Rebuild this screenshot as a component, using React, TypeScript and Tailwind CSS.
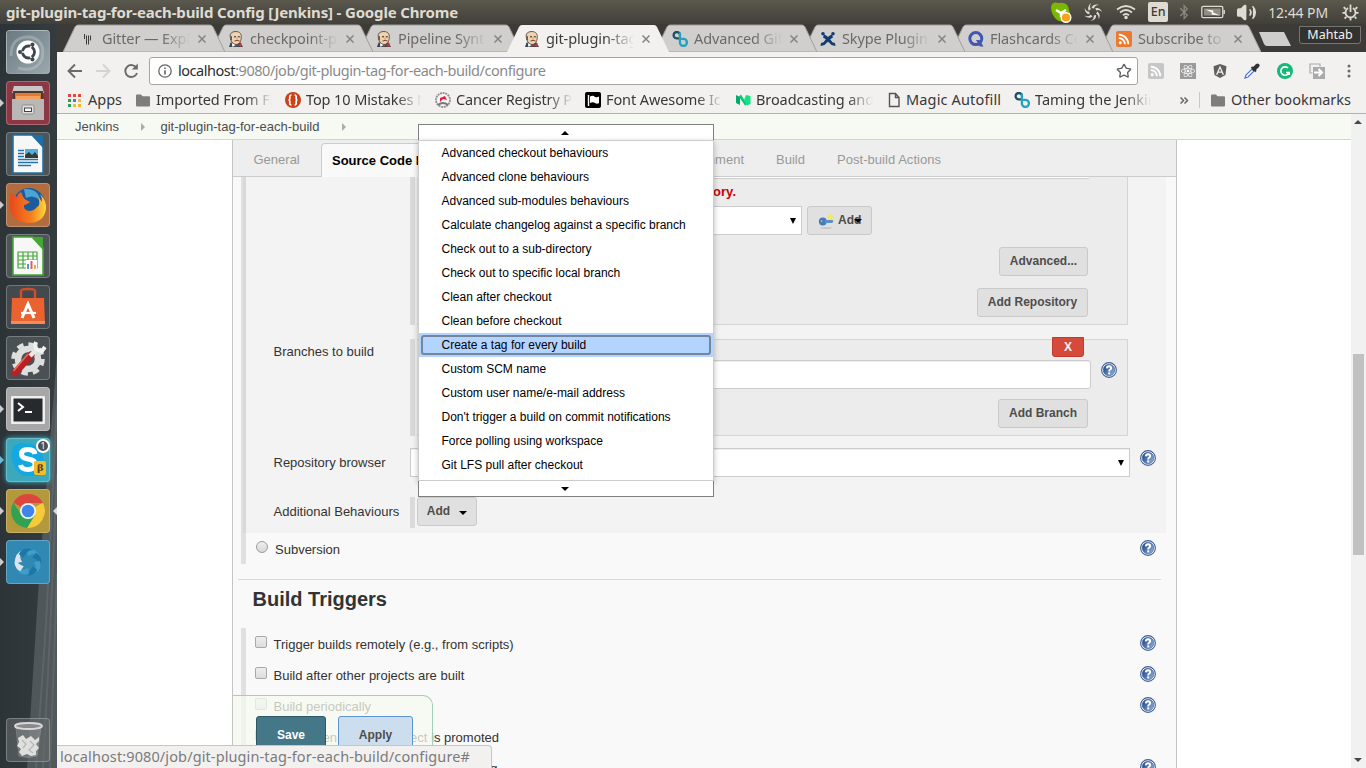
import React from "react";
import { FaReact, FaAngular, FaRss, FaBluetoothB } from "react-icons/fa";
import { Star, Volume2 } from "lucide-react";

/* ---------- small drawings ---------- */

const Butler = () => (
  <svg viewBox="0 0 16 16" className="size-4 shrink-0">
    <path d="M1 16 L2.500 11.500 H12.500 L15 16Z" fill="#3c4650" />
    <path d="M2.200 5 C1.800 1.500 5.500 .5 8 .5 C12 .7 13.800 3 13.200 7 C13 11 11 13.500 8 13.500 C4.500 13 2.500 10 2.200 5Z" fill="#efd2b0" stroke="#4a3d35" strokeWidth=".8" />
    <path d="M2.600 4.500 L2.200 9 L4 9.500 V5.500Z" fill="#6b5a4a" />
    <path d="M6 5.800h2M9.800 5.800h2" stroke="#2c2622" strokeWidth="1" />
    <path d="M6.500 10 Q9.200 8.800 11.600 10" stroke="#7a4030" strokeWidth="1" fill="none" />
    <path d="M9 6.500v2.200" stroke="#b58a68" strokeWidth=".8" />
    <path d="M8 13.500 L13.500 16 V12 L7 16Z" fill="#d33833" />
    <path d="M3.800 12 L7.500 14 L4.500 16Z" fill="#fff" />
  </svg>
);

const Bees = () => (
  <svg viewBox="0 0 16 16" className="size-4 shrink-0" fill="none" strokeWidth="2.300">
    <path d="M8 4.600 A3.200 3.200 0 1 0 4.600 7.400 L8.500 7.400" stroke="#1d4f66" />
    <path d="M7.900 1.500 V11.400 A3.500 3.500 0 1 0 11.400 7.900 H8" stroke="#1fa3bf" />
  </svg>
);

const GitterMark = () => (
  <svg viewBox="0 0 16 16" className="size-4 shrink-0" stroke="#3a3a3a" strokeWidth="1">
    <path d="M4.500 3v5M6.500 4.500v9M8.500 4.500v9M10.500 4.500v5" />
  </svg>
);

const CrossMark = () => (
  <svg viewBox="0 0 16 16" className="size-4 shrink-0" fill="none" stroke="#123a73" strokeWidth="3">
    <path d="M.8 13.200 Q3.500 14 6 10.500 Q9.500 6 12.500 5" />
    <path d="M15.200 13.200 Q12.500 14 10 10.500 Q6.500 6 3.500 5" />
    <circle cx="3" cy="2.800" r="1.800" fill="#123a73" stroke="none" /><circle cx="13" cy="2.800" r="1.800" fill="#123a73" stroke="none" />
  </svg>
);

const QMark = () => (
  <svg viewBox="0 0 16 16" className="size-4 shrink-0">
    <circle cx="7.800" cy="7.600" r="6" fill="none" stroke="#4257b2" strokeWidth="3" />
    <path d="M8 9 L11.500 9 L15.500 15.500 L11.800 15.500Z" fill="#4257b2" />
  </svg>
);

const RssTile = () => (
  <span className="flex size-4 shrink-0 items-center justify-center rounded-[2px] bg-[#ec7a2e]">
    <FaRss className="size-3 text-white" />
  </span>
);

const Folder = () => (
  <svg viewBox="0 0 14 13" className="h-[13px] w-[14px] shrink-0" fill="#7d7d7d">
    <path d="M0 1.500 Q0 .5 1 .5 H5 L6.500 2.200 H13 Q14 2.200 14 3.200 V11.500 Q14 12.500 13 12.500 H1 Q0 12.500 0 11.500Z" />
  </svg>
);

const Help = () => (
  <svg viewBox="0 0 16 16" className="size-4 shrink-0">
    <defs>
      <linearGradient id="hg" x1="0" x2="1" y1=".2" y2=".8">
        <stop offset="0" stopColor="#20478c" /><stop offset="1" stopColor="#8fadd3" />
      </linearGradient>
    </defs>
    <circle cx="8" cy="8" r="7.400" fill="#fff" stroke="#3d609b" strokeWidth="1.100" />
    <circle cx="8" cy="8" r="5.800" fill="url(#hg)" stroke="#3a5f9c" strokeWidth=".6" />
    <path d="M5.800 6.400 Q5.900 4.300 8 4.300 Q10.200 4.400 10.200 6.200 Q10.100 7.400 8.700 8 Q8.200 8.400 8.200 9.400" fill="none" stroke="#fff" strokeWidth="1.900" />
    <rect x="7.200" y="10.400" width="2" height="2" fill="#fff" />
  </svg>
);

const Down = ({ className = "" }: { className?: string }) => (
  <svg viewBox="0 0 8 4" className={`h-1 w-2 shrink-0 ${className}`}><path d="M0 0H8L4 4Z" fill="#000" /></svg>
);

const SelectArrow = () => (
  <svg viewBox="0 0 6 6" className="h-1.5 w-1.5 shrink-0"><path d="M0 0H6L3 6Z" fill="#000" /></svg>
);

/* ---------- desktop panel ---------- */

const sixth = [0, 51, 103, 154, 206, 257, 309];

const TopPanel = () => (
  <div className="flex h-6 shrink-0 items-center bg-linear-to-b from-[#5b584d] to-[#403f39] pl-1.5 pr-[7px] font-['Noto_Sans',sans-serif] text-[#dfdbd2]">
    <div className="flex-1 whitespace-nowrap text-[15px] font-bold tracking-[-0.160px]">git-plugin-tag-for-each-build Config [Jenkins] - Google Chrome</div>
    <svg viewBox="0 0 22 22" className="mr-3 h-[22px] w-[22px]">
      <path d="M1 6 Q2 0 8 2 Q18 0 19 9 Q22 16 17 20 Q9 22 5 17 Q1 12 1 6Z" fill="#7ab800" />
      <path d="M6 9l5 3 5-3M11 12v4" stroke="#fff" strokeWidth="2.500" fill="none" />
      <circle cx="16" cy="16.500" r="4.800" fill="#f9a11b" stroke="#fff" strokeWidth="1.400" />
    </svg>
    <svg viewBox="0 0 18 18" className="mr-[14px] size-[18px]" fill="#dfdbd2">
      {sixth.map((a) => <path key={a} d="M7.500 5Q9 .5 15 1.800Q10.500 2.500 10 5.500Z" transform={`rotate(${a} 9 9)`} />)}
    </svg>
    <svg viewBox="0 0 20 16" className="mr-3 h-4 w-5" fill="none" stroke="#dfdbd2" strokeWidth="1.800">
      <path d="M1 5.500Q10 -1.500 19 5.500M4 8.500Q10 3.500 16 8.500M7 11.300Q10 8.700 13 11.300" /><circle cx="10" cy="13.500" r=".9" />
    </svg>
    <div className="mr-[10px] flex h-5 w-5 items-center justify-center rounded-[2px] bg-[#dfdbd2] text-[12.500px] font-medium text-[#3c3b37]">En</div>
    <FaBluetoothB className="mr-[11px] h-4 w-3 text-[#8b887e]" />
    <svg viewBox="0 0 24 14" className="mr-[11px] h-3.5 w-6">
      <rect x=".8" y="1.300" width="21" height="11.400" rx="1.500" fill="none" stroke="#dfdbd2" strokeWidth="1.300" />
      <rect x="3" y="3.500" width="16.600" height="7" fill="#918e85" />
      <path d="M4.500 4.500L12.500 5.500L12 7.500L19 10.500L10.500 9.500L11 7.500Z" fill="#fff" /><path d="M23.200 5v4" stroke="#dfdbd2" strokeWidth="1.400" />
    </svg>
    <Volume2 className="mr-[11px] size-[21px] fill-[#dfdbd2]" strokeWidth={1.800} />
    <div className="mr-[14px] text-[14px] tracking-[-0.1px]">12:44 PM</div>
    <svg viewBox="0 0 18 18" className="size-[17px]" fill="none" stroke="#dfdbd2">
      <path d="M6.500 4.300A5.300 5.300 0 1 0 11.500 4.300M9 .5V8.500" strokeWidth="1.900" />
      <path d="M3.800 5.300L1.800 3.300M14.200 5.300L16.200 3.300M.5 9.500H3.500M14.500 9.500H17.500M4.500 13.500L2.800 15.400M13.500 13.500L15.200 15.400M9 14.500V17.500" strokeWidth="1.900" />
    </svg>
  </div>
);

const Tile = ({ bg, mark, children, right }: { bg: string; mark?: string; children: React.ReactNode; right?: boolean }) => (
  <div className="flex w-full items-center">
    <svg viewBox="0 0 4 8" className="h-2 w-1" fill={mark ?? "none"}><path d="M0 0L4 4L0 8Z" /></svg>
    <div className={`ml-0.5 flex size-11 shrink-0 items-center justify-center rounded-[4px] border border-white/25 ${bg}`}>{children}</div>
    {right && <svg viewBox="0 0 4 8" className="ml-[3px] h-2 w-1"><path d="M4 0L0 4L4 8Z" fill="#ddd" /></svg>}
  </div>
);

const DocIcon = ({ color, sheet }: { color: string; sheet?: boolean }) => (
  <svg viewBox="0 0 34 40" className="h-10 w-[34px]">
    <path d="M2 1H22L32 12V39H2Z" fill="#f7f7f7" stroke={color} strokeWidth="1.500" />
    <path d="M20 1H32V14Z" fill={color} />
    {sheet ? (
      <g>
        <path d="M7 16H26V32H7ZM7 20H26M7 24H26M7 28H26M12 16V32M17 16V32M22 16V32" fill="none" stroke="#43a832" strokeWidth="1.200" />
        <rect x="15" y="24" width="11" height="9" fill="#fff" />
        <path d="M17 33V28" stroke="#4a9ad6" strokeWidth="2" /><path d="M20.500 33V25" stroke="#e55" strokeWidth="2" /><path d="M24 33V29" stroke="#edb13a" strokeWidth="2" />
      </g>
    ) : (
      <g>
        <path d="M7 16.500H13M7 19.500H13M7 22.500H13M7 25.500H27M7 28.500H27M7 31.500H20" stroke="#2473a8" strokeWidth="1.400" />
        <rect x="14" y="15" width="13" height="9" fill="#55aee0" /><path d="M14 24V21L18 18L21 21L24 18L27 22V24Z" fill="#333d33" />
      </g>
    )}
  </svg>
);

const blades = [0, 45, 90, 135, 180, 225, 270, 315];

const Launcher = () => (
  <div className="relative flex w-[57px] shrink-0 flex-col bg-linear-to-r from-[#2c3438] to-[#353c40] pt-1.5">
    <svg viewBox="0 0 57 744" className="absolute inset-0 h-[744px] w-[57px]">
      <path d="M57 330L49 430L40 540L27 744H57Z" fill="#747c7f" opacity=".45" />
      <path d="M57 380L46 600L36 744M57 450L50 610L43 744M57 550L50 744" stroke="#abb0b1" strokeWidth="2" opacity=".15" fill="none" />
    </svg>
    <div className="relative flex flex-1 flex-col gap-[7px] pb-[6px]">
      <Tile bg="bg-linear-to-br from-[#6b7a82] to-[#9aa8ad]">
        <svg viewBox="0 0 40 40" className="size-10">
          <path d="M3 24Q3 4 22 5Q38 8 34 27Q28 41 10 36" fill="none" stroke="#c5ced2" strokeWidth="3" opacity=".4" />
          <circle cx="20" cy="20" r="11.500" fill="#fff" />
          <circle cx="20.500" cy="20" r="6" fill="none" stroke="#3d474c" strokeWidth="2.800" />
          <path d="M20 20L10 20M20 20L25.500 30M20 20L25.500 10" stroke="#fff" strokeWidth="1.500" />
          <circle cx="12" cy="20" r="2" fill="#3d474c" /><circle cx="24.500" cy="27.500" r="2" fill="#3d474c" /><circle cx="24.500" cy="12.500" r="2" fill="#3d474c" />
        </svg>
      </Tile>
      <Tile bg="bg-[#8e3744]" mark="#ccc">
        <svg viewBox="0 0 40 40" className="size-10">
          <path d="M6 3H34L36 10H4Z" fill="#c9c7c5" /><rect x="5" y="8" width="30" height="10" fill="#473a35" />
          <path d="M7 10H33V18H7Z" fill="#e27a33" /><path d="M8 13H32V18H8Z" fill="#f2a15f" />
          <path d="M4 16H36V37H4Z" fill="#b9b8b7" /><rect x="14" y="22" width="12" height="9" rx="1.500" fill="#dedede" stroke="#8a8a8a" /><rect x="16.500" y="25" width="7" height="3.500" fill="#fff" stroke="#444" />
        </svg>
      </Tile>
      <Tile bg="bg-[#4d5559]"><DocIcon color="#1e6fa5" /></Tile>
      <Tile bg="bg-[#b16c3f]" mark="#ccc">
        <svg viewBox="0 0 40 40" className="size-10">
          <defs><linearGradient id="ff" x1="0" x2="1"><stop offset="0" stopColor="#e8481c" /><stop offset=".6" stopColor="#f4801f" /><stop offset="1" stopColor="#ffd83b" /></linearGradient></defs>
          <circle cx="21" cy="19" r="16" fill="#1d5c9c" /><path d="M16 4Q30 3 32 15Q25 9 18 13Z" fill="#4aa3d4" />
          <path d="M3 8Q5 9 9 12Q11 6 14 8Q14 12 18 15L22 17Q18 20 16 20Q15 25 21 26Q26 26 29 22Q33 20 30 12Q33 15 34 17Q34 12 32 9Q39 16 38 24Q36 38 20 38Q5 37 2 24Q1 16 3 8Z" fill="url(#ff)" />
        </svg>
      </Tile>
      <Tile bg="bg-[#4d5559]"><DocIcon color="#43a832" sheet /></Tile>
      <Tile bg="bg-[#44494d]">
        <svg viewBox="0 0 40 40" className="size-10">
          <path d="M13 14V4Q13 2 20 2Q27 2 27 4V14" fill="none" stroke="#d04c2b" strokeWidth="2.500" />
          <path d="M4 11H36L37 37H3Z" fill="#e9622f" /><path d="M3 34H37V37H3Z" fill="#f58a5a" />
          <path d="M14 31L20 17L26 31" fill="none" stroke="#fff" strokeWidth="3" /><path d="M13 26H28" stroke="#fff" strokeWidth="2.200" />
        </svg>
      </Tile>
      <Tile bg="bg-[#4a5054]">
        <svg viewBox="0 0 40 40" className="size-10">
          <circle cx="20" cy="21" r="14.500" fill="none" stroke="#dcdfdd" strokeWidth="4.500" strokeDasharray="6.400 4.990" />
          <circle cx="20" cy="21" r="10" fill="none" stroke="#dcdfdd" strokeWidth="6.500" />
          <path d="M7 35L23 17" stroke="#b92022" strokeWidth="7" strokeLinecap="round" /><path d="M5.500 33L20 16" stroke="#ed6a5f" strokeWidth="1.500" />
          <path d="M22 18L29 11" stroke="#e8e8e8" strokeWidth="4.500" /><path d="M28 4Q25 12 34 13L37 9" fill="none" stroke="#f1f1f1" strokeWidth="4" />
        </svg>
      </Tile>
      <Tile bg="bg-[#a7a7a7]" mark="#ccc">
        <svg viewBox="0 0 40 40" className="size-10">
          <rect x="3" y="7" width="34" height="28" rx="1" fill="#eee" /><rect x="5.500" y="9.500" width="29" height="23" fill="#262a2c" />
          <path d="M10 14L15 18L10 22M17 23H24" fill="none" stroke="#fff" strokeWidth="2" />
        </svg>
      </Tile>
      <Tile bg="bg-[#3ba9bb] shadow-[0_0_5px_#35c4dc]" mark="#6db9d8">
        <div className="relative size-10">
          <svg viewBox="0 0 40 40" className="size-10">
            <path d="M5 8Q10 1 18 4Q32 4 35 16Q36 22 36 27Q34 38 24 36Q10 38 6 25Q1 16 5 8Z" fill="#14a7e2" />
            <path d="M27 14Q26 9.500 20 9.500Q13.500 9.500 13.500 14Q13.500 18 20 19Q27.500 20 27 25Q26.500 29.500 20 29.500Q13.500 29.500 12.500 25" fill="none" stroke="#fff" strokeWidth="5" />
            <rect x="26" y="21" width="12" height="14" rx="2" fill="#f4bd24" />
          </svg>
          <span className="absolute left-[29px] top-[20px] font-['DejaVu_Serif',serif] text-[10px] font-bold text-[#514122]">β</span>
          <span className="absolute -top-[1px] left-[28px] flex size-[14px] items-center justify-center rounded-full border-2 border-white bg-[#515151] font-['Noto_Sans',sans-serif] text-[9px] text-white">1</span>
        </div>
      </Tile>
      <Tile bg="bg-[#b3983c]" mark="#ccc" right>
        <svg viewBox="0 0 40 40" className="size-10">
          <path d="M20 20L5.400 11.500A17 17 0 0 1 35 12L20 12Z" fill="#dc473d" />
          <path d="M20 20L34.700 11.800A17 17 0 0 1 19 37L26.500 24Z" fill="#f6ca38" />
          <path d="M20 20L13.500 24.500L5.400 11.500A17 17 0 0 0 19 37L27 24Z" fill="#31a253" />
          <circle cx="20" cy="20" r="8" fill="#f5f5f5" /><circle cx="20" cy="20" r="6.300" fill="#3f84ea" />
        </svg>
      </Tile>
      <Tile bg="bg-[#3189b3]" mark="#ccc">
        <svg viewBox="0 0 40 40" className="size-10">
          {blades.map((a) => (
            <path key={a} d="M19 8Q28 5 32 15Q27 10 20 14Z" fill={a === 225 || a === 270 ? "#dce6ea" : a % 90 ? "#1c76a6" : "#3f9fca"} transform={`rotate(${a} 20 20)`} />
          ))}
        </svg>
      </Tile>
      <div className="mt-auto">
        <Tile bg="bg-[#666b6d]/60">
          <svg viewBox="0 0 40 40" className="size-10">
            <path d="M8 7L11 36Q20 39 29 36L33 7Z" fill="#aaaeaf" opacity=".35" stroke="#c3c5c5" />
            <ellipse cx="20.500" cy="6" rx="13.500" ry="3" fill="#8a8a8a" stroke="#d8d8d8" strokeWidth="1.800" />
            <path d="M10 18L15 15L18 19L23 16L27 20L31 17L31 21L28 24L31 28L28 31L28 35L23 36L19 34L14 36L11 32L13 29L9 26L11 22Z" fill="#dfe0de" />
            <path d="M14 20L18 24L15 28M22 21L26 25L21 30L25 33" stroke="#b7b9b7" fill="none" strokeWidth="1.300" />
          </svg>
        </Tile>
      </div>
    </div>
  </div>
);

/* ---------- browser chrome ---------- */

const tabs: { t: string; icon: React.ReactNode; z: string; active?: boolean }[] = [
  { t: "Gitter — Explo", icon: <GitterMark />, z: "z-[8]" },
  { t: "checkpoint-pl", icon: <Butler />, z: "z-[7]" },
  { t: "Pipeline Synta", icon: <Butler />, z: "z-[6]" },
  { t: "git-plugin-tag", icon: <Butler />, z: "z-[9]", active: true },
  { t: "Advanced Git", icon: <Bees />, z: "z-[4]" },
  { t: "Skype Plugin", icon: <CrossMark />, z: "z-[3]" },
  { t: "Flashcards Co", icon: <QMark />, z: "z-[2]" },
  { t: "Subscribe to", icon: <RssTile />, z: "z-[1]" },
];

const TabStrip = () => (
  <div className="flex h-7 shrink-0 bg-[#3c3b37] pl-1.5 font-['Noto_Sans',sans-serif]">
    {tabs.map((tab) => (
      <div key={tab.t} className={`relative w-[148px] shrink-0 ${tab.z}`}>
        <svg viewBox="0 0 162 28" className="absolute left-0 top-0 h-7 w-[162px]">
          <path d="M0 28L12 3Q13 1 15 1H147Q149 1 150 3L162 28Z" fill={tab.active ? "#f2f1f0" : "#d0cfcd"} stroke="#a09f9c" strokeWidth={tab.active ? 0 : 1} />
        </svg>
        <div className="relative flex h-full items-center pl-[17px] pt-[2px]">
          {tab.icon}
          <div className={`ml-[6px] w-[88px] overflow-hidden whitespace-nowrap text-[14.500px] tracking-[-0.1px] [mask-image:linear-gradient(to_right,#000_68%,transparent)] ${tab.active ? "text-[#3c3c3c]" : "text-[#6a6a69]"}`}>{tab.t}</div>
          <svg viewBox="0 0 8 8" className="ml-2 size-2" stroke="#85847f" strokeWidth="1.500"><path d="M.5 .5L7.500 7.500M7.500 .5L.5 7.500" /></svg>
        </div>
      </div>
    ))}
    <svg viewBox="0 0 34 16" className="ml-[11px] mt-[7px] h-4 w-[34px]"><path d="M1 1H26L33 15H9Q7 15 6 13Z" fill="#cfcecc" /></svg>
    <div className="ml-[7px] mt-[2px] flex h-[18px] w-[62px] items-center justify-center rounded-b-[3px] border border-[#77756f] bg-[#33322f] text-[12.500px] text-[#f2f1f0]">Mahtab</div>
  </div>
);

const AddressBar = () => (
  <div className="flex h-[34px] items-start pt-[5px] font-['Noto_Sans',sans-serif]">
    <svg viewBox="0 0 92 27" className="h-[27px] w-[92px] shrink-0" fill="none" strokeWidth="1.900">
      <path d="M25 14H12M18 7.500L11.500 14L18 20.500" stroke="#6a6a6a" />
      <path d="M39 14H52M46 7.500L52.500 14L46 20.500" stroke="#d3d3d2" />
      <path d="M79.500 11A6 6 0 1 0 80 16" stroke="#6a6a6a" /><path d="M80.800 6.500V12.500H74.800Z" fill="#6a6a6a" />
    </svg>
    <div className="flex h-7 w-[989px] shrink-0 items-center rounded-[3px] border border-[#a6a5a3] bg-white pl-2 pr-[5px]">
      <svg viewBox="0 0 14 14" className="size-3.5 shrink-0" fill="none" stroke="#656565" strokeWidth="1.300"><circle cx="7" cy="7" r="6.200" /><path d="M7 6.200V10.500M7 3.500V5" strokeWidth="1.600" /></svg>
      <div className="ml-1.5 flex-1 whitespace-nowrap text-[14.500px] tracking-[-0.460px] text-[#8a8a8a]"><span className="text-[#2b2b2b]">localhost</span>:9080/job/git-plugin-tag-for-each-build/configure</div>
      <Star className="size-4 text-[#5e5e5e]" strokeWidth={2} />
    </div>
    <div className="flex h-7 flex-1 items-center justify-between pl-[10px] pr-[15px]">
      <span className="flex size-4 items-center justify-center rounded-[2px] bg-[#c6c6c6]"><FaRss className="size-3 text-white" /></span>
      <span className="flex size-4 items-center justify-center bg-[#9a9a9a]"><FaReact className="size-3.5 text-white" /></span>
      <FaAngular className="size-4 text-[#5f5f5f]" />
      <svg viewBox="0 0 16 16" className="size-4"><path d="M1 15L2 12L9 5L11 7L4 14Z" fill="#fff" stroke="#4a74d8" strokeWidth="1.200" /><path d="M7.500 4L12 8.500" stroke="#333" strokeWidth="1.800" /><path d="M10 6L13.500 2.500" stroke="#333" strokeWidth="4" strokeLinecap="round" /></svg>
      <svg viewBox="0 0 16 16" className="size-4"><circle cx="8" cy="8" r="8" fill="#15b877" /><path d="M11 5A4.200 4.200 0 1 0 12 9.500H9M12.200 9V12" fill="none" stroke="#fff" strokeWidth="1.700" /></svg>
      <svg viewBox="0 0 16 16" className="size-4"><path d="M11 3.500V1H1V10H3.500" fill="none" stroke="#aaa" strokeWidth="1.200" /><rect x="4" y="4" width="12" height="12" fill="#aaa" /><path d="M5 9.500H13M9.500 6L13 9.500L9.500 13" stroke="#fff" strokeWidth="2" fill="none" /></svg>
      <svg viewBox="0 0 4 14" className="ml-1.5 h-3.5 w-1" fill="#6a6a6a"><circle cx="2" cy="2" r="1.500" /><circle cx="2" cy="7" r="1.500" /><circle cx="2" cy="12" r="1.500" /></svg>
    </div>
  </div>
);

const fade = "[mask-image:linear-gradient(to_right,#000_78%,transparent)]";

const Mark = ({ icon, text, w, tw }: { icon: React.ReactNode; text: string; w: string; tw: string }) => (
  <div className={`flex shrink-0 items-center ${w}`}>
    {icon}
    <div className={`overflow-hidden whitespace-nowrap ${tw}`}>{text}</div>
  </div>
);

const Bookmarks = () => (
  <div className="flex h-[28px] items-center pl-[11px] font-['Noto_Sans',sans-serif] text-[14.500px] tracking-[0px] text-[#383838]">
    <svg viewBox="0 0 13 13" className="size-[13px] shrink-0">
      {["#e8453c", "#e8453c", "#e8453c", "#2f9e55", "#3f7fe0", "#f2b92e", "#2f9e55", "#f2b92e", "#f2b92e"].map((c, i) => (
        <rect key={i} x={(i % 3) * 5} y={Math.floor(i / 3) * 5} width="3" height="3" fill={c} />
      ))}
    </svg>
    <div className="ml-[7px] w-12">Apps</div>
    <Mark w="w-[149px]" tw={`ml-[6px] w-[116px] tracking-[-0.1px] ${fade}`} text="Imported From Fi" icon={<Folder />} />
    <Mark w="w-[150px]" tw={`ml-[5px] w-[116px] tracking-[-0.1px] ${fade}`} text="Top 10 Mistakes N" icon={
      <svg viewBox="0 0 16 16" className="size-4 shrink-0"><circle cx="8" cy="8" r="8" fill="#cb4119" /><path d="M6.500 3Q4.500 3 4.800 5.500Q5 8 3.500 8Q5 8 4.800 10.500Q4.500 13 6.500 13M9.500 3Q11.500 3 11.200 5.500Q11 8 12.500 8Q11 8 11.200 10.500Q11.500 13 9.500 13" fill="none" stroke="#fff" strokeWidth="1.700" /></svg>} />
    <Mark w="w-[150px]" tw={`ml-[5px] w-[117px] tracking-[-0.2px] ${fade}`} text="Cancer Registry Pr" icon={
      <svg viewBox="0 0 16 16" className="size-4 shrink-0"><circle cx="8" cy="8" r="7" fill="#f4f4f4" stroke="#909090" strokeWidth="1.800" strokeDasharray="2 .7" /><path d="M5 6L10 4L12 8L8 7L5 10Z" fill="#e02040" /><path d="M3 13Q8 9 13 13" stroke="#777" fill="none" strokeWidth="2" /></svg>} />
    <Mark w="w-[150px]" tw={`ml-[5px] w-[117px] tracking-[-0.1px] ${fade}`} text="Font Awesome Ic" icon={
      <svg viewBox="0 0 16 16" className="size-4 shrink-0"><rect width="16" height="16" rx="2" fill="#000" /><path d="M3.500 3V14" stroke="#fff" strokeWidth="1.400" /><path d="M5 4.500Q8 3 10 5Q12 5.800 14 4.500V11Q12 12.300 10 11Q8 9.500 5 11Z" fill="#fff" /></svg>} />
    <Mark w="w-[153px]" tw={`ml-[5px] w-[117px] tracking-[-0.1px] ${fade}`} text="Broadcasting and" icon={
      <svg viewBox="0 0 16 16" className="size-4 shrink-0"><path d="M1 3L5 5V13L1 11Z" fill="#00ab6b" /><path d="M4 4.500L6 2.500L12 12.500L10 13.500Z" fill="#00c978" /><path d="M9 8L11 3L15.500 4V12L12 13.500Z" fill="#15e282" /></svg>} />
    <Mark w="w-[126px]" tw="ml-[5px] tracking-[0.150px]" text="Magic Autofill" icon={
      <svg viewBox="0 0 13 16" className="h-4 w-[13px] shrink-0"><path d="M1.500 1.500H7.500L11 5.500V14.500H1.500ZM7.500 1.500V5.500H11" fill="none" stroke="#555" strokeWidth="1.400" /></svg>} />
    <Mark w="w-[166px]" tw={`ml-[5px] w-[116px] ${fade}`} text="Taming the Jenkin" icon={<Bees />} />
    <svg viewBox="0 0 9 7" className="h-[7px] w-[9px]" fill="none" stroke="#666" strokeWidth="1.500"><path d="M.5 .5L3.500 3.500L.5 6.500M4.500 .5L7.500 3.500L4.500 6.500" /></svg>
    <div className="ml-[10px] mr-[11px] h-4 w-px bg-[#c9c8c6]" />
    <Folder />
    <div className="ml-[6px] whitespace-nowrap">Other bookmarks</div>
  </div>
);

/* ---------- page ---------- */

const Btn = ({ children, className = "" }: { children: React.ReactNode; className?: string }) => (
  <button className={`flex h-[29px] shrink-0 items-center justify-center whitespace-nowrap rounded-[3px] border border-[#cacaca] bg-[#e0e0e0] text-[12px] font-bold text-[#4d4d4d] ${className}`}>{children}</button>
);

const Rail = ({ className = "" }: { className?: string }) => <div className={`w-[5px] shrink-0 bg-[#dadada] ${className}`} />;

const Crumb = () => (
  <svg viewBox="0 0 4 8" className="h-2 w-1" fill="#a9aca7"><path d="M0 0L4 4L0 8Z" /></svg>
);

const FormTabs = () => (
  <div className="flex h-[37px] shrink-0 items-stretch border-b border-[#ccc] bg-[#eee] text-[13px] text-[#999]">
    <div className="flex w-[88px] items-center pl-[20.500px] pt-[3px]">General</div>
    <div className="mt-[3px] -mb-px flex w-[190px] items-center whitespace-nowrap rounded-t-[4px] border border-b-0 border-[#ccc] bg-[#f9f9f9] pb-px pl-2.5 font-bold text-black">Source Code Management</div>
    <div className="flex w-[122px] items-center pl-[22px] pt-[3px]">Build Triggers</div>
    <div className="flex w-[143px] items-center justify-end whitespace-nowrap pr-[32px] pt-[3px]">Build Environment</div>
    <div className="flex w-[61px] items-center pt-[3px]">Build</div>
    <div className="flex items-center pt-[3px] tracking-[0.040px]">Post-build Actions</div>
  </div>
);

const RepositoryPanel = () => (
  <div className="flex h-[148px]">
    <div className="w-[164px]" />
    <Rail />
    <div className="ml-0.5 flex w-[711px] flex-col border-b border-r border-[#d4d4d4] bg-[#ececec]">
      <div className="ml-2 h-0.5 w-[665px] rounded-b border-b border-[#ccc] bg-white" />
      <div className="mt-1 h-[17px] w-[319px] whitespace-nowrap text-right text-[13px] leading-[17px] font-bold text-[#c00]">Please enter Git repository.</div>
      <div className="mt-1.5 flex">
        <div className="ml-2 flex h-[29px] w-[377px] items-center justify-end border border-[#ccc] bg-white pr-[5px]"><SelectArrow /></div>
        <Btn className="relative ml-[5px] w-[65px] justify-start! pl-2.5">
          <svg viewBox="0 0 17 16" className="mr-[3px] h-4 w-[17px] shrink-0">
            <ellipse cx="8" cy="15" rx="6" ry="1" fill="#c8c8c8" /><path d="M12.500 1.500L13.600 3.500L15.500 4.500L13.600 5.500L12.500 7.500L11.400 5.500L9.500 4.500L11.400 3.500Z" fill="#f3ec4a" stroke="#f3ec4a" />
            <circle cx="4.800" cy="8.500" r="3.900" fill="#477cb8" /><path d="M7 7H14.500L15.500 8.500L14 10H7Z" fill="#5d8ec5" /><circle cx="3.600" cy="8" r=".8" fill="#b9cfe6" />
          </svg>
          Add
          <Down className="absolute right-[9px] top-[12px]" />
        </Btn>
      </div>
      <div className="mt-3 flex justify-end pr-[39px]"><Btn className="w-[89px]">Advanced...</Btn></div>
      <div className="mt-3 flex justify-end pr-[39px]"><Btn className="w-[111px]">Add Repository</Btn></div>
    </div>
  </div>
);

const BranchesPanel = () => (
  <div className="mt-3.5 flex h-[97px]">
    <div className="w-[164px] pl-[27.500px] pt-[5px]">Branches to build</div>
    <Rail />
    <div className="ml-0.5 flex w-[711px] flex-col border border-l-0 border-[#d4d4d4] bg-[#ececec]">
      <button className="-mt-[3px] mr-[43px] flex h-5 w-8 shrink-0 items-center justify-center self-end rounded-b-[3px] border border-[#bf3a2d] bg-[#d54a3a] text-[12px] font-bold text-[#f4f4f4]">X</button>
      <div className="mt-[3px] flex items-start pr-[10px]">
        <div className="ml-2 h-[29px] w-[666px] rounded-[3px] border border-[#ccc] bg-white shadow-[inset_0_1px_1px_rgba(0,0,0,.07)]" />
        <div className="ml-auto mt-0.5"><Help /></div>
      </div>
      <div className="mt-2.5 flex justify-end pr-[39px]"><Btn className="w-[90px]">Add Branch</Btn></div>
    </div>
  </div>
);

const Trigger = ({ text, help = true }: { text: string; help?: boolean }) => (
  <div className="flex h-[31px] items-start">
    <div className="ml-[9px] mt-[8px] size-3 shrink-0 rounded-[2px] border border-[#a9a9a9] bg-linear-to-b from-[#eee] to-[#ddd]" />
    <div className="ml-[6.500px] flex-1 pt-[9px]">{text}</div>
    {help && <div className="mr-[20px] mt-[7px]"><Help /></div>}
  </div>
);

const ConfigForm = () => (
  <div className="flex flex-1 flex-col overflow-hidden bg-[#f9f9f9]">
    <div className="flex h-[387px] shrink-0 pl-2">
      <div className="w-0.5 shrink-0 bg-[#e0e0e0]" />
      <div className="flex w-[3px] shrink-0 flex-col"><div className="h-[356px] bg-[#d9d9d9]" /><div className="flex-1 bg-[#e0e0e0]" /></div>
      <div className="flex-1">
        <div className="h-[356px] w-[920px] bg-[#f3f3f3]">
          <RepositoryPanel />
          <BranchesPanel />
          <div className="mt-3 flex h-[29px] items-start">
            <div className="w-[164px] pl-[27.500px] pt-[7px]">Repository browser</div>
            <div className="flex h-[29px] w-[720px] shrink-0 items-center justify-end border border-[#ccc] bg-white pr-[5px] shadow-[inset_0_1px_1px_rgba(0,0,0,.07)]"><SelectArrow /></div>
            <div className="ml-[10px] mt-0.5"><Help /></div>
          </div>
          <div className="mt-5 flex h-[31px]">
            <div className="w-[164px] whitespace-nowrap pl-[27.500px] pt-[7px]">Additional Behaviours</div>
            <Rail />
            <Btn className="ml-0.5 w-[60px] gap-[9px]">Add<Down className="mt-0.5" /></Btn>
          </div>
        </div>
        <div className="flex items-start pl-2.5 pt-2">
          <div className="size-3 rounded-full border border-[#9c9c9c] bg-linear-to-b from-[#eee] to-[#d8d8d8]" />
          <div className="ml-[7px] mt-px flex-1">Subversion</div>
          <div className="-mt-px mr-[20px]"><Help /></div>
        </div>
      </div>
    </div>
    <div className="ml-[5px] mt-[15px] h-px w-[923px] shrink-0 bg-[#d9d9d9]" />
    <div className="ml-[19.500px] mt-1 h-[30px] shrink-0 text-[20px] leading-[30px] font-bold">Build Triggers</div>
    <div className="mt-[14px] flex flex-1 pl-2">
      <div className="w-[5px] shrink-0 bg-[#e0e0e0]" />
      <div className="flex-1">
        <Trigger text="Trigger builds remotely (e.g., from scripts)" />
        <Trigger text="Build after other projects are built" />
        <Trigger text="Build periodically" />
        <Trigger text="Build when another project is promoted" help={false} />
        <Trigger text="GitHub hook trigger for GITScm polling" />
      </div>
    </div>
  </div>
);

const items = [
  "Advanced checkout behaviours", "Advanced clone behaviours", "Advanced sub-modules behaviours",
  "Calculate changelog against a specific branch", "Check out to a sub-directory", "Check out to specific local branch",
  "Clean after checkout", "Clean before checkout", "Create a tag for every build", "Custom SCM name",
  "Custom user name/e-mail address", "Don't trigger a build on commit notifications", "Force polling using workspace",
  "Git LFS pull after checkout",
];

const BehavioursMenu = () => (
  <div className="absolute left-[418px] top-[124px] z-20 flex w-[296px] flex-col font-['Liberation_Sans',Arial,sans-serif] text-[12px] text-black">
    <div className="flex h-4 items-center justify-center border border-b-0 border-[#7f7f7f] bg-white pr-0.5"><Down className="rotate-180" /></div>
    <div className="h-[341px] border border-[#ccc] bg-white shadow-[0_2px_6px_rgba(0,0,0,.25)]">
      {items.map((it) => {
        const on = it === "Create a tag for every build";
        return (
          <div key={it} className={`flex h-6 p-0.5 ${on ? "bg-[#b3d4ff]" : ""}`}>
            <div className={`flex flex-1 items-center whitespace-nowrap rounded-[3px] border-2 pl-[18.500px] ${on ? "border-[#73869e]" : "border-transparent"}`}>{it}</div>
          </div>
        );
      })}
    </div>
    <div className="relative flex h-4 items-center justify-center border border-t-0 border-[#7f7f7f] bg-white pr-0.5"><Down /></div>
  </div>
);

const Page = () => (
  <div className="flex min-h-0 flex-1 font-['Liberation_Sans',Arial,sans-serif] text-[13px] leading-[15px] text-[#333]">
    <div className="flex flex-1 flex-col bg-white">
      <div className="flex h-[26px] shrink-0 items-center border-b border-[#d3d6d0] bg-[#f6faf2] pl-[18px] text-[#4d4d4d]">
        <span className="w-[66px]">Jenkins</span><Crumb /><span className="ml-[15.500px] w-[181px]">git-plugin-tag-for-each-build</span><Crumb />
      </div>
      <div className="ml-[175px] flex min-h-0 w-[945px] flex-1 flex-col border-x border-[#c4c4c4]">
        <FormTabs />
        <ConfigForm />
      </div>
    </div>
    <div className="flex w-[15px] shrink-0 flex-col items-center bg-[#f1f1f1] pb-[6px] pt-[6px]">
      <Down className="mr-px rotate-180 opacity-70" />
      <div className="mt-[230px] h-[201px] w-[11px] bg-[#c1c1c1]" />
      <Down className="mr-px mt-auto opacity-70" />
    </div>
  </div>
);

const SaveBar = () => (
  <div className="absolute left-[233px] top-[695px] z-10 flex h-[73px] w-[200px] gap-3 rounded-tr-[10px] border border-b-0 border-l-0 border-[#a5cdb9] bg-[#f5f9ef]/75 pl-[23px] pt-5 font-['Liberation_Sans',Arial,sans-serif] text-[12px] font-bold">
    <div className="flex h-[38px] w-[70px] items-center justify-center rounded-[3px] border border-[#2e5764] bg-[#447788] text-white">Save</div>
    <div className="flex h-[38px] w-[75px] items-center justify-center rounded-[3px] border border-[#5c94d1] bg-[#ccdded] text-[#4d4d4d]">Apply</div>
  </div>
);

const StatusBubble = () => (
  <div className="absolute left-[57px] top-[745px] z-30 flex h-[23px] w-[435px] items-center rounded-tr-[4px] border border-b-0 border-l-0 border-[#c7c6c4] bg-[#f2f1f0] pl-[3px] font-['Noto_Sans',sans-serif] text-[14.500px] tracking-[0.110px] text-[#7b7b7a]">
    localhost:9080/job/git-plugin-tag-for-each-build/configure#
  </div>
);

export default function App() {
  return (
    <div className="relative flex h-[768px] w-[1366px] flex-col overflow-hidden bg-white">
      <TopPanel />
      <div className="flex min-h-0 flex-1">
        <Launcher />
        <div className="flex min-w-0 flex-1 flex-col">
          <TabStrip />
          <div className="h-[62px] shrink-0 border-b border-[#b3b2b0] bg-[#f2f1f0]">
            <AddressBar />
            <Bookmarks />
          </div>
          <Page />
        </div>
      </div>
      <BehavioursMenu />
      <SaveBar />
      <StatusBubble />
    </div>
  );
}
